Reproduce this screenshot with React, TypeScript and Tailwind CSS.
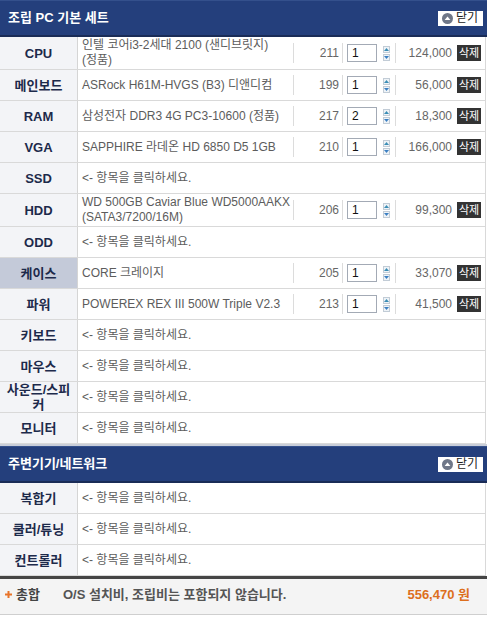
import React from "react";

type Part = {
  label: string;
  name?: string;
  code?: string;
  qty?: string;
  price?: string;
  active?: boolean;
};

const basicParts: Part[] = [
  { label: "CPU", name: "인텔 코어i3-2세대 2100 (샌디브릿지) (정품)", code: "211", qty: "1", price: "124,000" },
  { label: "메인보드", name: "ASRock H61M-HVGS (B3) 디앤디컴", code: "199", qty: "1", price: "56,000" },
  { label: "RAM", name: "삼성전자 DDR3 4G PC3-10600 (정품)", code: "217", qty: "2", price: "18,300" },
  { label: "VGA", name: "SAPPHIRE 라데온 HD 6850 D5 1GB", code: "210", qty: "1", price: "166,000" },
  { label: "SSD" },
  { label: "HDD", name: "WD 500GB Caviar Blue WD5000AAKX (SATA3/7200/16M)", code: "206", qty: "1", price: "99,300" },
  { label: "ODD" },
  { label: "케이스", name: "CORE 크레이지", code: "205", qty: "1", price: "33,070", active: true },
  { label: "파워", name: "POWEREX REX III 500W Triple V2.3", code: "213", qty: "1", price: "41,500" },
  { label: "키보드" },
  { label: "마우스" },
  { label: "사운드/스피커" },
  { label: "모니터" },
];

const extraParts: Part[] = [{ label: "복합기" }, { label: "쿨러/튜닝" }, { label: "컨트롤러" }];

function CloseButton() {
  return (
    <button className="flex h-[15px] items-center gap-[3px] bg-white pl-[4px] pr-[5px] text-[12px] leading-none text-[#222]">
      <svg width="11" height="11" viewBox="0 0 11 11">
        <circle cx="5.5" cy="5.5" r="5.5" fill="#6f7788" />
        <path d="M2.6 7 L5.5 3.4 L8.4 7 Z" fill="#fff" />
      </svg>
      닫기
    </button>
  );
}

function SectionHeader({ title }: { title: string }) {
  return (
    <div className="flex h-[37px] items-center justify-between border-t border-t-[#34508c] border-b-2 border-b-[#1a2c57] bg-[#243f7c] pl-[8px] pr-[4px]">
      <span className="text-[13px] font-bold text-white">{title}</span>
      <CloseButton />
    </div>
  );
}

function Sep() {
  return <div className="h-[20px] w-px shrink-0 self-center bg-[#dcdcdc]" />;
}

function Spinner() {
  return (
    <div className="flex flex-col gap-px">
      <div className="flex h-[7px] w-[7px] items-center justify-center border border-[#c2ccd6] bg-[#eef3f7]">
        <svg width="5" height="3" viewBox="0 0 5 3">
          <path d="M0 3 L2.5 0 L5 3 Z" fill="#3b8db5" />
        </svg>
      </div>
      <div className="flex h-[7px] w-[7px] items-center justify-center border border-[#c2ccd6] bg-[#eef3f7]">
        <svg width="5" height="3" viewBox="0 0 5 3">
          <path d="M0 0 L2.5 3 L5 0 Z" fill="#3b7fc2" />
        </svg>
      </div>
    </div>
  );
}

function PartRow({ part }: { part: Part }) {
  return (
    <div className="flex min-h-[31px] border-b border-r border-[#d9d9d9]">
      <div
        className={`flex w-[78px] shrink-0 items-center justify-center break-all border-r border-[#d5d5d5] px-[3px] text-center text-[13px] font-bold leading-[15px] text-[#1d2a4b] ${
          part.active ? "bg-[#c4cad9]" : "bg-[#f3f4f7]"
        }`}
      >
        {part.label}
      </div>
      {part.name ? (
        <>
          <div className="flex w-[215px] shrink-0 items-center break-keep py-px pl-[4px] text-[12px] leading-[15px] text-[#5c5c5c]">
            {part.name}
          </div>
          <Sep />
          <div className="flex w-[48px] shrink-0 items-center justify-end pr-[3px] text-[12px] text-[#666]">
            {part.code}
          </div>
          <Sep />
          <div className="flex w-[52px] shrink-0 items-center gap-[6px] pl-[4px]">
            <div className="flex h-[18px] w-[30px] items-center border border-[#a3aab5] bg-white pl-[4px] text-[12px] text-[#111]">
              {part.qty}
            </div>
            <Spinner />
          </div>
          <Sep />
          <div className="flex flex-1 items-center justify-end gap-[5px] pr-[4px]">
            <span className="text-[12px] text-[#666]">{part.price}</span>
            <span className="flex h-[16px] w-[24px] items-center justify-center bg-[#333] text-[11px] leading-none text-white">
              삭제
            </span>
          </div>
        </>
      ) : (
        <div className="flex flex-1 items-center pl-[4px] text-[12px] text-[#5c5c5c]">&lt;- 항목을 클릭하세요.</div>
      )}
    </div>
  );
}

export default function App() {
  return (
    <div className="w-[487px] bg-white font-['Liberation_Sans','Noto_Sans_CJK_KR',sans-serif]">
      <SectionHeader title="조립 PC 기본 세트" />
      <div className="w-[486px]">
        {basicParts.map((p) => (
          <PartRow key={p.label} part={p} />
        ))}
      </div>
      <div className="h-[2px] bg-[#c9ced9]" />
      <SectionHeader title="주변기기/네트워크" />
      <div className="w-[486px]">
        {extraParts.map((p) => (
          <PartRow key={p.label} part={p} />
        ))}
      </div>
      <div className="flex h-[39px] items-start border-t-[3px] border-b border-t-[#454545] border-b-[#cfcfcf] bg-[#f4f4f4] pt-[6px] text-[13px] font-bold">
        <div className="flex items-center pl-[5px]">
          <svg width="7" height="7" viewBox="0 0 7 7" className="mr-[4px]">
            <path d="M2.5 0 H4.5 V2.5 H7 V4.5 H4.5 V7 H2.5 V4.5 H0 V2.5 H2.5 Z" fill="#e8742a" />
          </svg>
          <span className="text-[#444]">총합</span>
        </div>
        <span className="ml-[23px] text-[#555]">O/S 설치비, 조립비는 포함되지 않습니다.</span>
        <span className="ml-auto pr-[17px] text-[#dd6f1d]">556,470 원</span>
      </div>
    </div>
  );
}
